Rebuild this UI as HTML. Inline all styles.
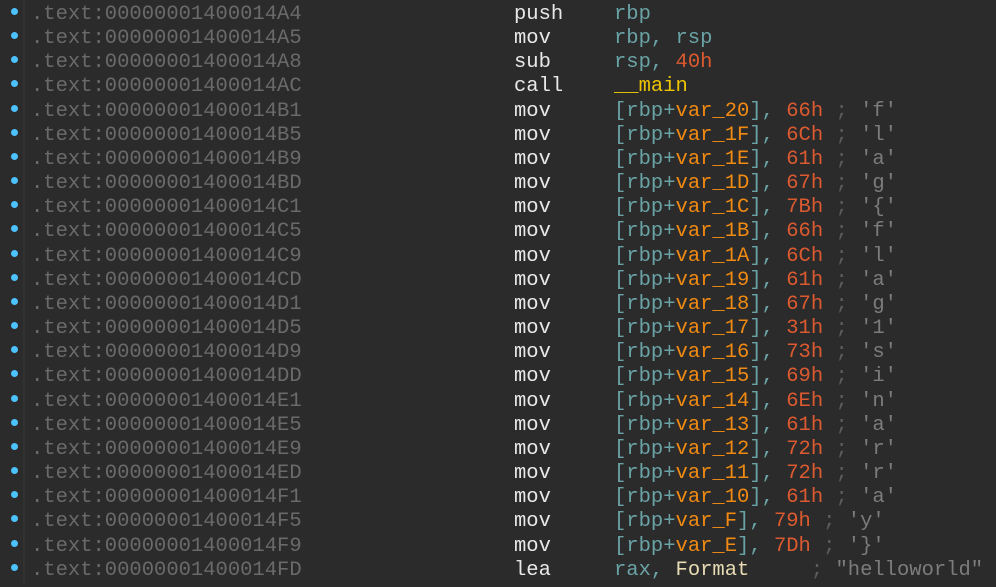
<!DOCTYPE html>
<html><head><meta charset="utf-8"><style>
html,body{margin:0;padding:0;}
body{width:996px;height:585px;background:#2b2b2b;overflow:hidden;position:relative;font-family:"Liberation Mono",monospace;font-size:20.5px;}
.gut{position:absolute;left:23px;top:0;width:2px;height:585px;background:#323232;}
.wrap{position:absolute;left:0;top:2px;width:996px;height:585px;}
.row{position:absolute;left:0;height:24px;width:996px;line-height:24px;white-space:pre;}
.dot{position:absolute;left:11px;top:5px;width:7px;height:7px;border-radius:50%;background:#4cc2ff;}
.a{position:absolute;left:31px;color:#6a6a6a;}
.m{position:absolute;left:514px;color:#e8e8e8;}
.o{position:absolute;left:614px;color:#6aa3a6;}
.v{color:#f08a12;}
.n{color:#dc5a30;}
.c{color:#5c5c5c;}
.s{color:#7c7c7c;}
.y{color:#ecc500;}
.f{color:#e8dcb4;}
</style></head><body>
<div class="gut"></div>
<div class="wrap">
<div class="row" style="top:1px"><div class="dot"></div><span class="a">.text:00000001400014A4</span><span class="m">push</span><span class="o">rbp</span></div>
<div class="row" style="top:25px"><div class="dot"></div><span class="a">.text:00000001400014A5</span><span class="m">mov</span><span class="o">rbp, rsp</span></div>
<div class="row" style="top:49px"><div class="dot"></div><span class="a">.text:00000001400014A8</span><span class="m">sub</span><span class="o">rsp, <span class="n">40h</span></span></div>
<div class="row" style="top:73px"><div class="dot"></div><span class="a">.text:00000001400014AC</span><span class="m">call</span><span class="o"><span class="y">__main</span></span></div>
<div class="row" style="top:98px"><div class="dot"></div><span class="a">.text:00000001400014B1</span><span class="m">mov</span><span class="o">[rbp+<span class="v">var_20</span>], <span class="n">66h</span> <span class="c">;</span> <span class="s">'f'</span></span></div>
<div class="row" style="top:122px"><div class="dot"></div><span class="a">.text:00000001400014B5</span><span class="m">mov</span><span class="o">[rbp+<span class="v">var_1F</span>], <span class="n">6Ch</span> <span class="c">;</span> <span class="s">'l'</span></span></div>
<div class="row" style="top:146px"><div class="dot"></div><span class="a">.text:00000001400014B9</span><span class="m">mov</span><span class="o">[rbp+<span class="v">var_1E</span>], <span class="n">61h</span> <span class="c">;</span> <span class="s">'a'</span></span></div>
<div class="row" style="top:170px"><div class="dot"></div><span class="a">.text:00000001400014BD</span><span class="m">mov</span><span class="o">[rbp+<span class="v">var_1D</span>], <span class="n">67h</span> <span class="c">;</span> <span class="s">'g'</span></span></div>
<div class="row" style="top:194px"><div class="dot"></div><span class="a">.text:00000001400014C1</span><span class="m">mov</span><span class="o">[rbp+<span class="v">var_1C</span>], <span class="n">7Bh</span> <span class="c">;</span> <span class="s">'{'</span></span></div>
<div class="row" style="top:218px"><div class="dot"></div><span class="a">.text:00000001400014C5</span><span class="m">mov</span><span class="o">[rbp+<span class="v">var_1B</span>], <span class="n">66h</span> <span class="c">;</span> <span class="s">'f'</span></span></div>
<div class="row" style="top:243px"><div class="dot"></div><span class="a">.text:00000001400014C9</span><span class="m">mov</span><span class="o">[rbp+<span class="v">var_1A</span>], <span class="n">6Ch</span> <span class="c">;</span> <span class="s">'l'</span></span></div>
<div class="row" style="top:267px"><div class="dot"></div><span class="a">.text:00000001400014CD</span><span class="m">mov</span><span class="o">[rbp+<span class="v">var_19</span>], <span class="n">61h</span> <span class="c">;</span> <span class="s">'a'</span></span></div>
<div class="row" style="top:291px"><div class="dot"></div><span class="a">.text:00000001400014D1</span><span class="m">mov</span><span class="o">[rbp+<span class="v">var_18</span>], <span class="n">67h</span> <span class="c">;</span> <span class="s">'g'</span></span></div>
<div class="row" style="top:315px"><div class="dot"></div><span class="a">.text:00000001400014D5</span><span class="m">mov</span><span class="o">[rbp+<span class="v">var_17</span>], <span class="n">31h</span> <span class="c">;</span> <span class="s">'1'</span></span></div>
<div class="row" style="top:339px"><div class="dot"></div><span class="a">.text:00000001400014D9</span><span class="m">mov</span><span class="o">[rbp+<span class="v">var_16</span>], <span class="n">73h</span> <span class="c">;</span> <span class="s">'s'</span></span></div>
<div class="row" style="top:363px"><div class="dot"></div><span class="a">.text:00000001400014DD</span><span class="m">mov</span><span class="o">[rbp+<span class="v">var_15</span>], <span class="n">69h</span> <span class="c">;</span> <span class="s">'i'</span></span></div>
<div class="row" style="top:388px"><div class="dot"></div><span class="a">.text:00000001400014E1</span><span class="m">mov</span><span class="o">[rbp+<span class="v">var_14</span>], <span class="n">6Eh</span> <span class="c">;</span> <span class="s">'n'</span></span></div>
<div class="row" style="top:412px"><div class="dot"></div><span class="a">.text:00000001400014E5</span><span class="m">mov</span><span class="o">[rbp+<span class="v">var_13</span>], <span class="n">61h</span> <span class="c">;</span> <span class="s">'a'</span></span></div>
<div class="row" style="top:436px"><div class="dot"></div><span class="a">.text:00000001400014E9</span><span class="m">mov</span><span class="o">[rbp+<span class="v">var_12</span>], <span class="n">72h</span> <span class="c">;</span> <span class="s">'r'</span></span></div>
<div class="row" style="top:460px"><div class="dot"></div><span class="a">.text:00000001400014ED</span><span class="m">mov</span><span class="o">[rbp+<span class="v">var_11</span>], <span class="n">72h</span> <span class="c">;</span> <span class="s">'r'</span></span></div>
<div class="row" style="top:484px"><div class="dot"></div><span class="a">.text:00000001400014F1</span><span class="m">mov</span><span class="o">[rbp+<span class="v">var_10</span>], <span class="n">61h</span> <span class="c">;</span> <span class="s">'a'</span></span></div>
<div class="row" style="top:508px"><div class="dot"></div><span class="a">.text:00000001400014F5</span><span class="m">mov</span><span class="o">[rbp+<span class="v">var_F</span>], <span class="n">79h</span> <span class="c">;</span> <span class="s">'y'</span></span></div>
<div class="row" style="top:533px"><div class="dot"></div><span class="a">.text:00000001400014F9</span><span class="m">mov</span><span class="o">[rbp+<span class="v">var_E</span>], <span class="n">7Dh</span> <span class="c">;</span> <span class="s">'}'</span></span></div>
<div class="row" style="top:557px"><div class="dot"></div><span class="a">.text:00000001400014FD</span><span class="m">lea</span><span class="o">rax, <span class="f">Format</span>     <span class="c">;</span> <span class="s">"helloworld"</span></span></div>
</div>
</body></html>
